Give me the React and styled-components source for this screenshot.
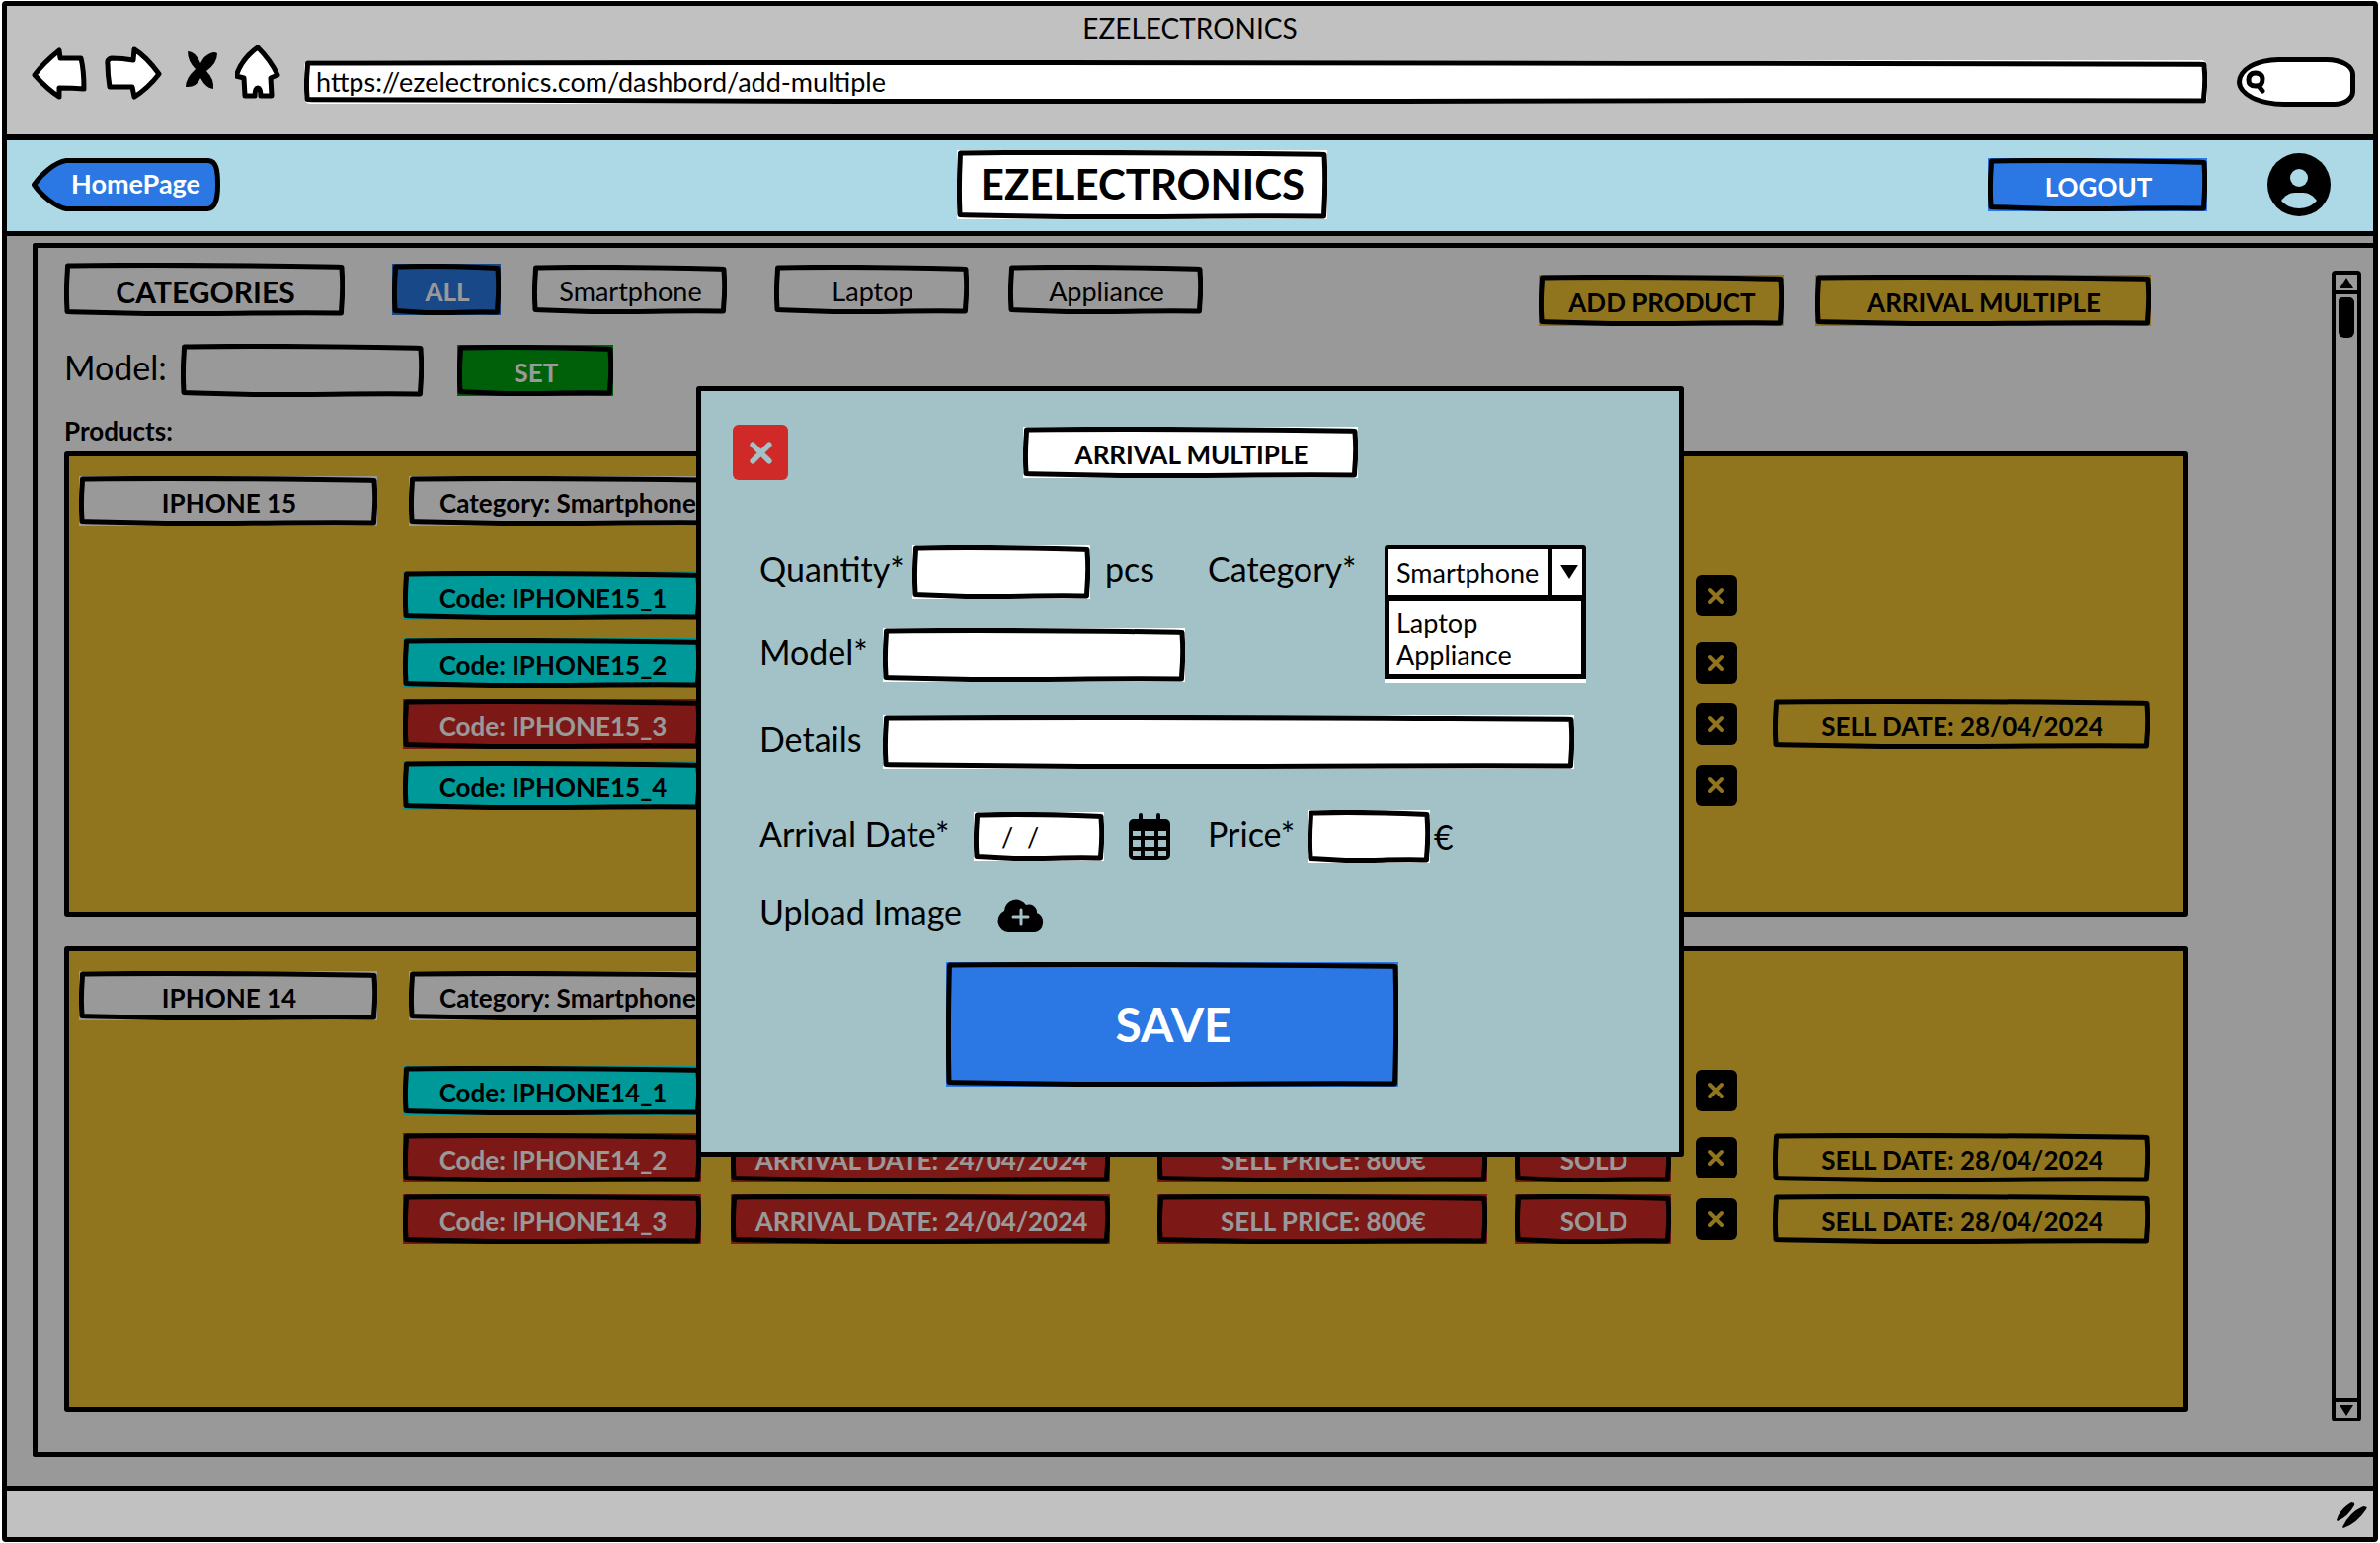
import React from "react";
import styled, { createGlobalStyle, css } from "styled-components";

const ink = "#000";
const blue = "#2b78e4";
const red = "#cf2a27";
const yellow = "#f1c232";
const teal = "#00ffff";
const green = "#009e0f";
const mist = "#a2c2c7";

const svgUrl = (markup) => `url("data:image/svg+xml,${encodeURIComponent(markup)}")`;

const roughFrame = svgUrl(
  `<svg xmlns="http://www.w3.org/2000/svg" width="200" height="100" viewBox="0 0 200 100"><path d="M3.5 3 C50 2 110 2.5 160 3.5 L197 4.5 C198 30 197.8 66 196.5 97 C150 96 110 98 60 97.5 L3 95.5 C2 64 2.5 30 3.5 3Z" fill="none" stroke="#000" stroke-width="5" stroke-linejoin="round"/></svg>`
);

const homeShape = svgUrl(
  `<svg xmlns="http://www.w3.org/2000/svg" width="191" height="54" viewBox="0 0 191 54" preserveAspectRatio="none"><path d="M2.5 27 C10 16 24 4 35 2.5 H179 C187 3 188.5 12 188.5 27 C188.5 42 186 51 178 51.5 H35 C24 49 10 38 2.5 27Z" fill="${blue}" stroke="#000" stroke-width="5" stroke-linejoin="round"/></svg>`
);

const sketch = css`
  border: 8px solid transparent;
  border-image: ${roughFrame} 8 stretch;
  background-clip: border-box;
`;

const GlobalStyle = createGlobalStyle`
  * { box-sizing: border-box; }
  body { margin: 0; background: #fff; }
  body, button, input, select { font-family: Lato, "Open Sans", sans-serif; color: ${ink}; }
  ul { list-style: none; margin: 0; padding: 0; }
  h1, h2, h3, p { margin: 0; }
`;

const Page = styled.div`
  display: flex;
  flex-direction: column;
  min-height: 100vh;
  padding: 1px 2px;
  font-size: 27px;
  line-height: 32px;
`;

const Window = styled.div`
  flex: 1;
  display: flex;
  flex-direction: column;
  border: 5px solid ${ink};
  border-radius: 4px;
  background: #c1c1c1;
`;

const Chrome = styled.header`
  padding-bottom: 16px;
`;

const WindowTitle = styled.p`
  padding: 6px 0 2px;
  font-size: 28px;
  text-align: center;
`;

const BrowserBar = styled.div`
  display: flex;
  align-items: center;
  gap: 22px;
  height: 74px;
  padding: 0 18px 0 25px;
`;

const NavIcons = styled.nav`
  align-self: flex-start;
  display: flex;
  gap: 18px;
`;

const IconButton = styled.button`
  display: block;
  padding: 0;
  border: 0;
  background: none;
  svg { display: block; }
`;

const AddressInput = styled.input`
  ${sketch}
  flex: 1;
  min-width: 0;
  height: 44px;
  padding: 0 4px 2px;
  background-color: #fff;
  border-radius: 6px;
  font-size: 27px;
  margin-right: 8px;
`;

const SearchBox = styled.label`
  display: flex;
  align-items: center;
  width: 120px;
  height: 50px;
  padding-left: 4px;
  border: 5px solid ${ink};
  border-radius: 44px 30px 22px 50px / 26px 18px 16px 26px;
  background: #fff;
`;

const SearchInput = styled.input`
  flex: 1;
  min-width: 0;
  border: 0;
  background: none;
  outline: none;
`;

const SiteHeader = styled.div`
  display: grid;
  grid-template-columns: 12fr auto 13fr;
  align-items: center;
  height: 103px;
  padding: 0 43px 2px 25px;
  border-top: 6px solid ${ink};
  border-bottom: 5px solid ${ink};
  background: #add8e6;
`;

const HomeLink = styled.a`
  justify-self: start;
  width: 191px;
  padding: 10px 20px 12px 40px;
  background: ${homeShape} 0 0 / 100% 100% no-repeat;
  color: #fff;
  font-weight: 700;
  text-decoration: none;
  white-space: nowrap;
`;

const Brand = styled.h1`
  ${sketch}
  width: 375px;
  height: 70px;
  background-color: #fff;
  font-size: 42px;
  line-height: 52px;
  text-align: center;
`;

const Account = styled.div`
  display: flex;
  align-items: center;
  justify-content: flex-end;
  gap: 61px;
`;

const boxed = css`
  ${sketch}
  display: block;
  width: ${(p) => p.$w}px;
  height: ${(p) => p.$h || 52}px;
  margin: 0 0 0 ${(p) => p.$lead || 0}px;
  padding: 4px 0 0 2px;
  background-color: ${(p) => p.$fill || "transparent"};
  color: ${(p) => p.$ink || ink};
  font-size: ${(p) => p.$size || 26}px;
  font-weight: ${(p) => (p.$light ? 400 : 700)};
  line-height: ${(p) => (p.$h || 52) - 20}px;
  text-align: center;
  white-space: nowrap;
`;

const BoxButton = styled.button`${boxed}`;
const BoxLabel = styled.span`${boxed}`;
const BoxHeading = styled.h2`${boxed}`;

const Content = styled.main`
  position: relative;
  flex: 1;
  display: flex;
  padding: 7px 0 29px 26px;
  background: #fff;
  &::after {
    content: "";
    position: absolute;
    inset: 0;
    background: rgba(0, 0, 0, 0.4);
  }
`;

const Panel = styled.section`
  flex: 1;
  display: flex;
  border: 5px solid ${ink};
  border-right: 0;
  border-radius: 3px 0 0 3px;
  padding: 15px 12px 31px 27px;
`;

const Catalogue = styled.div`
  flex: 1;
  margin-right: 145px;
`;

const FilterBar = styled.div`
  display: flex;
  align-items: flex-start;
  justify-content: space-between;
  padding-right: 38px;
`;

const Filters = styled.div`
  display: flex;
  align-items: center;
  gap: 32px;
`;

const Actions = styled.div`
  display: flex;
  gap: 32px;
  padding-top: 12px;
`;

const ModelFilter = styled.form`
  display: flex;
  align-items: center;
  margin-top: 18px;
`;

const FieldLabel = styled.label`
  flex: none;
  width: ${(p) => p.$w}px;
  padding-bottom: 6px;
  font-size: 34px;
  line-height: 40px;
  white-space: nowrap;
`;

const TextBox = styled.input`
  ${sketch}
  width: ${(p) => p.$w}px;
  height: ${(p) => p.$h || 54}px;
  padding: 0 0 2px ${(p) => p.$pad || 0}px;
  background-color: ${(p) => (p.$clear ? "transparent" : "#fff")};
  font-size: 27px;
  outline: none;
`;

const SectionTitle = styled.h2`
  margin: 18px 0 5px;
  font-size: 26px;
  line-height: 32px;
`;

const Cards = styled.div`
  display: flex;
  flex-direction: column;
  gap: 30px;
`;

const Card = styled.article`
  min-height: 471px;
  padding: 20px 34px 20px 10px;
  border: 5px solid ${ink};
  border-radius: 3px;
  background: ${yellow};
`;

const CardHead = styled.div`
  display: flex;
  gap: 32px;
  margin-bottom: 46px;
`;

const Units = styled.ul`
  display: flex;
  flex-direction: column;
  gap: 12px;
  padding-left: 328px;
`;

const Unit = styled.li`
  display: grid;
  grid-template-columns: 332fr 432fr 362fr 183fr 78fr 382fr;
  align-items: center;
  &:first-child { margin-bottom: 6px; }
`;

const CloseButton = styled.button`
  display: grid;
  place-items: center;
  width: 56px;
  height: 56px;
  padding: 0;
  border: 0;
  border-radius: 6px;
  background: ${red};
`;

const RemoveButton = styled(CloseButton)`
  grid-column: 5;
  width: 42px;
  height: 42px;
  background: ${ink};
`;

const ScrollTrack = styled.div`
  display: flex;
  flex-direction: column;
  width: 30px;
  margin-top: 8px;
  border: 4px solid ${ink};
  border-radius: 4px;
`;

const ScrollButton = styled.button`
  display: grid;
  place-items: center;
  height: 20px;
  padding: 0;
  border: 0 solid ${ink};
  border-width: ${(p) => (p.$end ? "4px 0 0" : "0 0 4px")};
  background: none;
`;

const ScrollThumb = styled.div`
  width: 16px;
  height: 41px;
  margin: 3px 3px auto;
  border-radius: 4px 5px 6px 6px;
  background: ${ink};
`;

const StatusBar = styled.footer`
  display: flex;
  align-items: flex-end;
  justify-content: flex-end;
  height: 52px;
  padding: 0 6px;
  border-top: 5px solid ${ink};
`;

const Backdrop = styled.div`
  position: fixed;
  inset: 0;
  display: grid;
  place-items: center;
`;

const Dialog = styled.section`
  width: 1000px;
  padding-bottom: 66px;
  border: 5px solid ${ink};
  border-radius: 3px;
  background: ${mist};
`;

const DialogHead = styled.div`
  display: grid;
  grid-template-columns: 1fr auto 1fr;
  align-items: center;
  padding: 34px 31px 0 32px;
`;

const Form = styled.form`
  padding: 66px 58px 0 59px;
`;

const Row = styled.div`
  display: flex;
  align-items: center;
  margin-bottom: ${(p) => p.$gap}px;
`;

const Half = styled.div`
  display: flex;
  align-items: center;
  width: ${(p) => (p.$rest ? "auto" : "454px")};
`;

const Suffix = styled.span`
  padding-bottom: ${(p) => (p.$low ? 0 : 6)}px;
  padding-left: ${(p) => (p.$low ? 4 : 15)}px;
  font-size: 34px;
  line-height: 40px;
`;

const Combo = styled.div`
  position: relative;
  width: 204px;
`;

const Select = styled.select`
  appearance: none;
  display: block;
  width: 100%;
  height: 54px;
  padding: 0 0 0 8px;
  border: 4px solid ${ink};
  border-radius: 3px;
  background: #fff;
  font-size: 27px;
  outline: none;
`;

const Arrow = styled.span`
  position: absolute;
  top: 0;
  right: 0;
  bottom: 0;
  display: grid;
  place-items: center;
  width: 38px;
  border-left: 4px solid ${ink};
  pointer-events: none;
`;

const Options = styled.ul`
  position: absolute;
  top: 50px;
  left: 0;
  right: 0;
  padding: 7px 7px 3px;
  border: 5px solid ${ink};
  border-top-width: 6px;
  background: #fff;
  box-shadow: 0 4px #fff;
`;

const IconSlot = styled.span`
  margin-left: 25px;
  svg { display: block; }
`;

const UploadLabel = styled.label`
  display: flex;
  align-items: center;
  gap: 36px;
  height: 36px;
  font-size: 34px;
  svg { display: block; }
`;

const UploadText = styled.span`
  padding-bottom: 6px;
`;

const HiddenFile = styled.input`
  display: none;
`;

const SaveButton = styled.button`
  ${sketch}
  display: block;
  width: 458px;
  height: 126px;
  margin-left: 189px;
  padding: 0 0 2px 2px;
  background-color: ${blue};
  color: #fff;
  font-size: 48px;
  font-weight: 700;
`;

const navStroke = { fill: "#fff", stroke: ink, strokeWidth: 5, strokeLinejoin: "round", strokeLinecap: "round" };

const BackIcon = () => (
  <svg width="56" height="54" viewBox="0 0 56 54">
    <path {...navStroke} d="M3 29 C11 18 18 12 28 4 L29 12 Q42 12 50 12 C52 20 53 30 53 43 Q42 42 28 42 L28 51 C18 45 12 39 3 29Z" />
  </svg>
);
const ForwardIcon = () => (
  <svg width="58" height="56" viewBox="0 0 58 56">
    <path {...navStroke} d="M3 19 Q2 14 7 13 Q18 13 29 15 L30 4 C40 10 47 18 55 29 C48 38 40 46 30 52 L28 42 L5 42 Q3 30 3 19Z" />
  </svg>
);
const StopIcon = () => (
  <svg width="38" height="56" viewBox="9 0 38 56">
    <path d="M17 6 Q25 6 30 18 Q34 10 40 8 Q44 6 47 8 Q47 18 36 26 Q44 34 43 44 Q36 44 30 33 Q26 43 15 42 Q15 33 25 24 Q17 16 17 6Z" />
  </svg>
);
const HomeIcon = () => (
  <svg width="48" height="56" viewBox="2 1 48 56">
    <path {...navStroke} d="M25 3 C33 11 40 20 45 31 L38 34 L39 52 L28 52 Q28 44 25 44 Q22 44 22 52 L12 52 L11 34 L3 32 C7 20 15 10 25 3Z" overflow="visible" />
  </svg>
);
const SearchIcon = () => (
  <svg width="20" height="24" viewBox="0 0 20 24" fill="none" stroke={ink} strokeWidth="5" strokeLinecap="round">
    <path d="M10 3 C5 3 3 6 3 10 C3 15 6 16 10 16 C15 16 17 14 17 9 C17 5 14 3 10 3Z M13 16 L17 21" />
  </svg>
);
const UserIcon = () => (
  <svg width="64" height="64" viewBox="0 0 64 64">
    <circle cx="32" cy="32" r="32" />
    <circle cx="32" cy="25" r="9" fill="#add8e6" />
    <path fill="#add8e6" d="M14 48 C18 43 22 40 28 40 H36 C42 40 46 43 50 48 C46 53 39 56 32 56 C25 56 18 53 14 48Z" />
  </svg>
);
const CrossIcon = ({ size = 18, color }) => (
  <svg width={size} height={size} viewBox="0 0 18 18" stroke={color} strokeWidth="4" strokeLinecap="round">
    <path d="M3 3 L15 15 M15 3 L3 15" />
  </svg>
);
const CalendarIcon = () => (
  <svg width="42" height="48" viewBox="0 0 42 48">
    <path
      fillRule="evenodd"
      d="M10 6V2a2 2 0 0 1 4 0V6H28V2a2 2 0 0 1 4 0V6H37a5 5 0 0 1 5 5V43a5 5 0 0 1-5 5H5a5 5 0 0 1-5-5V11a5 5 0 0 1 5-5Z M4 18v5h8v-5Z M16 18v5h10v-5Z M30 18v5h8v-5Z M4 27v7h8v-7Z M16 27v7h10v-7Z M30 27v7h8v-7Z M4 38v6h8v-6Z M16 38v6h10v-6Z M30 38v6h8v-6Z"
    />
  </svg>
);
const CloudIcon = () => (
  <svg width="48" height="34" viewBox="0 0 48 34">
    <path d="M11 34 A11 11 0 0 1 7 13 A12 12 0 0 1 29 7 A8 8 0 0 1 40 15 A10 10 0 0 1 38 34Z" />
    <path d="M24 12V26 M16 19H31" stroke={mist} strokeWidth="3" strokeLinecap="round" />
  </svg>
);
const Triangle = ({ down, w = 14, h = 11 }) => (
  <svg width={w} height={h} viewBox="0 0 14 11">
    <path d={down ? "M0 0H14L7 11Z" : "M0 11H14L7 0Z"} />
  </svg>
);
const GripIcon = () => (
  <svg width="32" height="36" viewBox="0 0 32 36">
    <path d="M1 19 Q4 8 16 1 Q20 1 19 4 Q13 15 2 20Z M7 26 Q14 11 28 5 Q33 5 31 8 Q22 22 8 27Z" />
  </svg>
);

const products = [
  {
    name: "IPHONE 15",
    units: [
      { code: "IPHONE15_1" },
      { code: "IPHONE15_2" },
      { code: "IPHONE15_3", sold: "28/04/2024" },
      { code: "IPHONE15_4" },
    ],
  },
  {
    name: "IPHONE 14",
    units: [
      { code: "IPHONE14_1" },
      { code: "IPHONE14_2", sold: "28/04/2024", arrival: "24/04/2024", price: "800€" },
      { code: "IPHONE14_3", sold: "28/04/2024", arrival: "24/04/2024", price: "800€" },
    ],
  },
];

function UnitRow({ unit }) {
  const tone = unit.sold ? { $fill: red, $ink: "#fff" } : { $fill: teal };
  return (
    <Unit>
      <BoxLabel $w={302} $h={50} {...tone}>Code: {unit.code}</BoxLabel>
      {unit.arrival && (
        <>
          <BoxLabel $w={384} $h={50} {...tone}>ARRIVAL DATE: {unit.arrival}</BoxLabel>
          <BoxLabel $w={334} $h={50} {...tone}>SELL PRICE: {unit.price}</BoxLabel>
          <BoxLabel $w={158} $h={50} {...tone}>SOLD</BoxLabel>
        </>
      )}
      <RemoveButton aria-label={`Remove ${unit.code}`}>
        <CrossIcon color={yellow} />
      </RemoveButton>
      {unit.sold && <BoxLabel $w={382} $h={50}>SELL DATE: {unit.sold}</BoxLabel>}
    </Unit>
  );
}

function ArrivalDialog() {
  return (
    <Backdrop>
      <Dialog role="dialog" aria-labelledby="dialog-title">
        <DialogHead>
          <CloseButton aria-label="Close">
            <CrossIcon size={25} color={mist} />
          </CloseButton>
          <BoxHeading id="dialog-title" $w={339} $fill="#fff">ARRIVAL MULTIPLE</BoxHeading>
        </DialogHead>
        <Form onSubmit={(e) => e.preventDefault()}>
          <Row $gap={30}>
            <Half>
              <FieldLabel $w={155} htmlFor="quantity">Quantity*</FieldLabel>
              <TextBox id="quantity" $w={180} />
              <Suffix>pcs</Suffix>
            </Half>
            <Half $rest>
              <FieldLabel $w={179} htmlFor="category">Category*</FieldLabel>
              <Combo>
                <Select id="category" defaultValue="Smartphone">
                  <option>Smartphone</option>
                  <option>Laptop</option>
                  <option>Appliance</option>
                </Select>
                <Arrow><Triangle down w={18} h={14} /></Arrow>
                <Options>
                  <li>Laptop</li>
                  <li>Appliance</li>
                </Options>
              </Combo>
            </Half>
          </Row>
          <Row $gap={34}>
            <FieldLabel $w={125} htmlFor="model">Model*</FieldLabel>
            <TextBox id="model" $w={306} />
          </Row>
          <Row $gap={42}>
            <FieldLabel $w={125} htmlFor="details">Details</FieldLabel>
            <TextBox id="details" $w={700} />
          </Row>
          <Row $gap={34}>
            <Half>
              <FieldLabel $w={217} htmlFor="arrival">Arrival Date*</FieldLabel>
              <TextBox id="arrival" $w={132} $h={50} $pad={20} defaultValue="/  /" />
              <IconSlot><CalendarIcon /></IconSlot>
            </Half>
            <Half $rest>
              <FieldLabel $w={101} htmlFor="price">Price*</FieldLabel>
              <TextBox id="price" $w={124} />
              <Suffix $low>€</Suffix>
            </Half>
          </Row>
          <Row $gap={30}>
            <UploadLabel>
              <UploadText>Upload Image</UploadText>
              <HiddenFile type="file" />
              <CloudIcon />
            </UploadLabel>
          </Row>
          <SaveButton type="submit">SAVE</SaveButton>
        </Form>
      </Dialog>
    </Backdrop>
  );
}

export default function App() {
  return (
    <Page>
      <GlobalStyle />
      <Window>
        <Chrome>
          <WindowTitle>EZELECTRONICS</WindowTitle>
          <BrowserBar>
            <NavIcons>
              <IconButton aria-label="Back"><BackIcon /></IconButton>
              <IconButton aria-label="Forward"><ForwardIcon /></IconButton>
              <IconButton aria-label="Stop"><StopIcon /></IconButton>
              <IconButton aria-label="Home"><HomeIcon /></IconButton>
            </NavIcons>
            <AddressInput aria-label="Address" defaultValue="https://ezelectronics.com/dashbord/add-multiple" />
            <SearchBox>
              <SearchIcon />
              <SearchInput aria-label="Search" />
            </SearchBox>
          </BrowserBar>
        </Chrome>
        <SiteHeader>
          <HomeLink href="#home">HomePage</HomeLink>
          <Brand>EZELECTRONICS</Brand>
          <Account>
            <BoxButton $w={222} $h={54} $fill={blue} $ink="#fff">LOGOUT</BoxButton>
            <IconButton aria-label="Account"><UserIcon /></IconButton>
          </Account>
        </SiteHeader>
        <Content>
          <Panel>
            <Catalogue>
              <FilterBar>
                <Filters>
                  <BoxHeading $w={284} $h={54} $size={30}>CATEGORIES</BoxHeading>
                  <BoxButton $w={110} $lead={16} $fill={blue} $ink="#fff">ALL</BoxButton>
                  <BoxButton $w={197} $h={50} $size={27} $light>Smartphone</BoxButton>
                  <BoxButton $w={197} $h={50} $size={27} $lead={16} $light>Laptop</BoxButton>
                  <BoxButton $w={197} $h={50} $size={27} $lead={8} $light>Appliance</BoxButton>
                </Filters>
                <Actions>
                  <BoxButton $w={248} $fill={yellow}>ADD PRODUCT</BoxButton>
                  <BoxButton $w={340} $fill={yellow}>ARRIVAL MULTIPLE</BoxButton>
                </Actions>
              </FilterBar>
              <ModelFilter onSubmit={(e) => e.preventDefault()}>
                <FieldLabel $w={118} htmlFor="model-filter">Model:</FieldLabel>
                <TextBox id="model-filter" $w={246} $clear />
                <BoxButton $w={158} $lead={34} $fill={green} $ink="#fff">SET</BoxButton>
              </ModelFilter>
              <SectionTitle>Products:</SectionTitle>
              <Cards>
                {products.map((product) => (
                  <Card key={product.name}>
                    <CardHead>
                      <BoxLabel $w={302} $h={50} $fill="#fff">{product.name}</BoxLabel>
                      <BoxLabel $w={320} $h={50} $fill="#fff">Category: Smartphone</BoxLabel>
                    </CardHead>
                    <Units>
                      {product.units.map((unit) => (
                        <UnitRow key={unit.code} unit={unit} />
                      ))}
                    </Units>
                  </Card>
                ))}
              </Cards>
            </Catalogue>
            <ScrollTrack>
              <ScrollButton aria-label="Scroll up"><Triangle /></ScrollButton>
              <ScrollThumb />
              <ScrollButton $end aria-label="Scroll down"><Triangle down /></ScrollButton>
            </ScrollTrack>
          </Panel>
        </Content>
        <StatusBar><GripIcon /></StatusBar>
      </Window>
      <ArrivalDialog />
    </Page>
  );
}
